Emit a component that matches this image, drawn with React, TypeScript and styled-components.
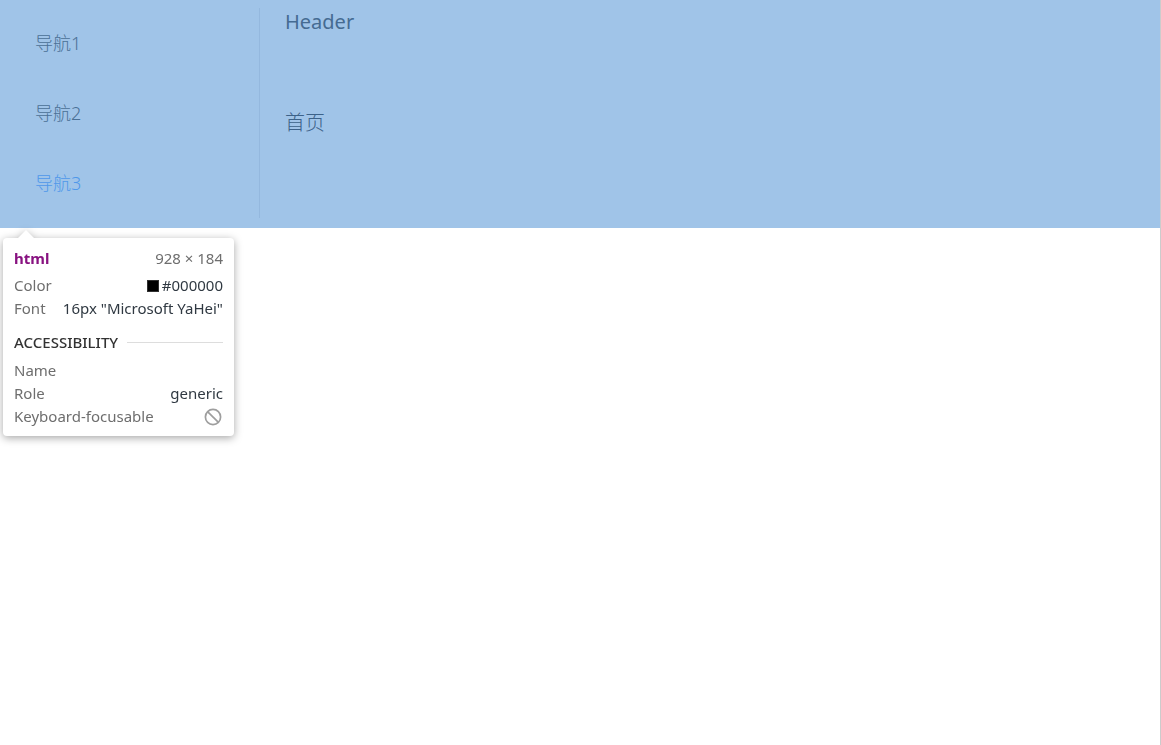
import React from "react";
import styled, { createGlobalStyle } from "styled-components";

const GlobalStyle = createGlobalStyle`
  * { box-sizing: border-box; }
  body {
    margin: 0;
    background: #ffffff;
    font-family: "Noto Sans", "Noto Sans CJK SC", sans-serif;
  }
`;

const Viewport = styled.div`
  min-height: 100vh;
  border-right: 1px solid #cccccc;
`;

const Page = styled.div`
  display: flex;
  padding: 8px 8px 10px;
  background: #a0c4e8;
`;

const Sidebar = styled.nav`
  width: 252px;
  border-right: 1px solid #94b8de;
`;

const NavList = styled.ul`
  margin: 0;
  padding: 0;
  list-style: none;
`;

const NavLink = styled.a<{ $active?: boolean }>`
  display: block;
  height: 70px;
  padding-left: 27px;
  font-size: 18px;
  font-weight: 300;
  line-height: 70px;
  text-decoration: none;
  color: ${(p) => (p.$active ? "#4f98ea" : "#4a7096")};
`;

const Content = styled.div`
  flex: 1;
  padding-left: 25px;
  font-size: 20px;
  color: #456b92;
`;

const Header = styled.header`
  height: 100px;
  line-height: 28px;
`;

const Main = styled.main`
  font-weight: 300;
  line-height: 30px;
  color: #3c6289;
`;

const Tooltip = styled.section`
  position: absolute;
  top: 238px;
  left: 3px;
  width: 231px;
  padding: 9px 11px 8px;
  border-radius: 4px;
  background: #ffffff;
  font-size: 15px;
  line-height: 23px;
  color: #303942;
  filter: drop-shadow(0 2px 4px rgba(0, 0, 0, 0.35));
`;

const Arrow = styled.svg`
  position: absolute;
  top: -9px;
  left: 14px;
`;

const Row = styled.div<{ $gap?: number }>`
  display: flex;
  align-items: center;
  justify-content: space-between;
  height: 23px;
  margin-bottom: ${(p) => p.$gap ?? 0}px;
  white-space: nowrap;
`;

const TagName = styled.strong`
  color: #881280;
  font-weight: 700;
`;

const Label = styled.span`
  color: #6e6e6e;
`;

const Value = styled.span`
  display: flex;
  align-items: center;
  gap: 3px;
`;

const Swatch = styled.span`
  width: 12px;
  height: 12px;
  background: #000000;
  border: 1px solid #303030;
`;

const SectionTitle = styled.h2`
  display: flex;
  align-items: center;
  gap: 9px;
  margin: 10px 0 5px;
  font-size: 15px;
  font-weight: 500;
  line-height: 24px;
  color: #333333;

  &::after {
    content: "";
    flex: 1;
    height: 1px;
    background: #dddddd;
  }
`;

const NotFocusable = styled.svg`
  margin-right: 1px;
`;

const navItems = ["导航1", "导航2", "导航3"];

export default function App() {
  return (
    <Viewport>
      <GlobalStyle />
      <Page>
        <Sidebar>
          <NavList>
            {navItems.map((item, i) => (
              <li key={item}>
                <NavLink href="#" $active={i === 2}>
                  {item}
                </NavLink>
              </li>
            ))}
          </NavList>
        </Sidebar>
        <Content>
          <Header>Header</Header>
          <Main>首页</Main>
        </Content>
      </Page>
      <Tooltip>
        <Arrow width="20" height="10" viewBox="0 0 20 10" aria-hidden="true">
          <path d="M0 10 L9 1 L18 10 Z" fill="#ffffff" />
        </Arrow>
        <Row $gap={4}>
          <TagName>html</TagName>
          <Label>928 × 184</Label>
        </Row>
        <Row>
          <Label>Color</Label>
          <Value>
            <Swatch />
            #000000
          </Value>
        </Row>
        <Row>
          <Label>Font</Label>
          <Value>16px "Microsoft YaHei"</Value>
        </Row>
        <SectionTitle>ACCESSIBILITY</SectionTitle>
        <Row>
          <Label>Name</Label>
        </Row>
        <Row>
          <Label>Role</Label>
          <Value>generic</Value>
        </Row>
        <Row>
          <Label>Keyboard-focusable</Label>
          <NotFocusable width="18" height="18" viewBox="0 0 18 18" role="img" aria-label="No">
            <circle cx="9" cy="9" r="7.6" fill="none" stroke="#9e9e9e" strokeWidth="1.7" />
            <path d="M3.8 3.8 L14.2 14.2" stroke="#9e9e9e" strokeWidth="1.7" />
          </NotFocusable>
        </Row>
      </Tooltip>
    </Viewport>
  );
}
